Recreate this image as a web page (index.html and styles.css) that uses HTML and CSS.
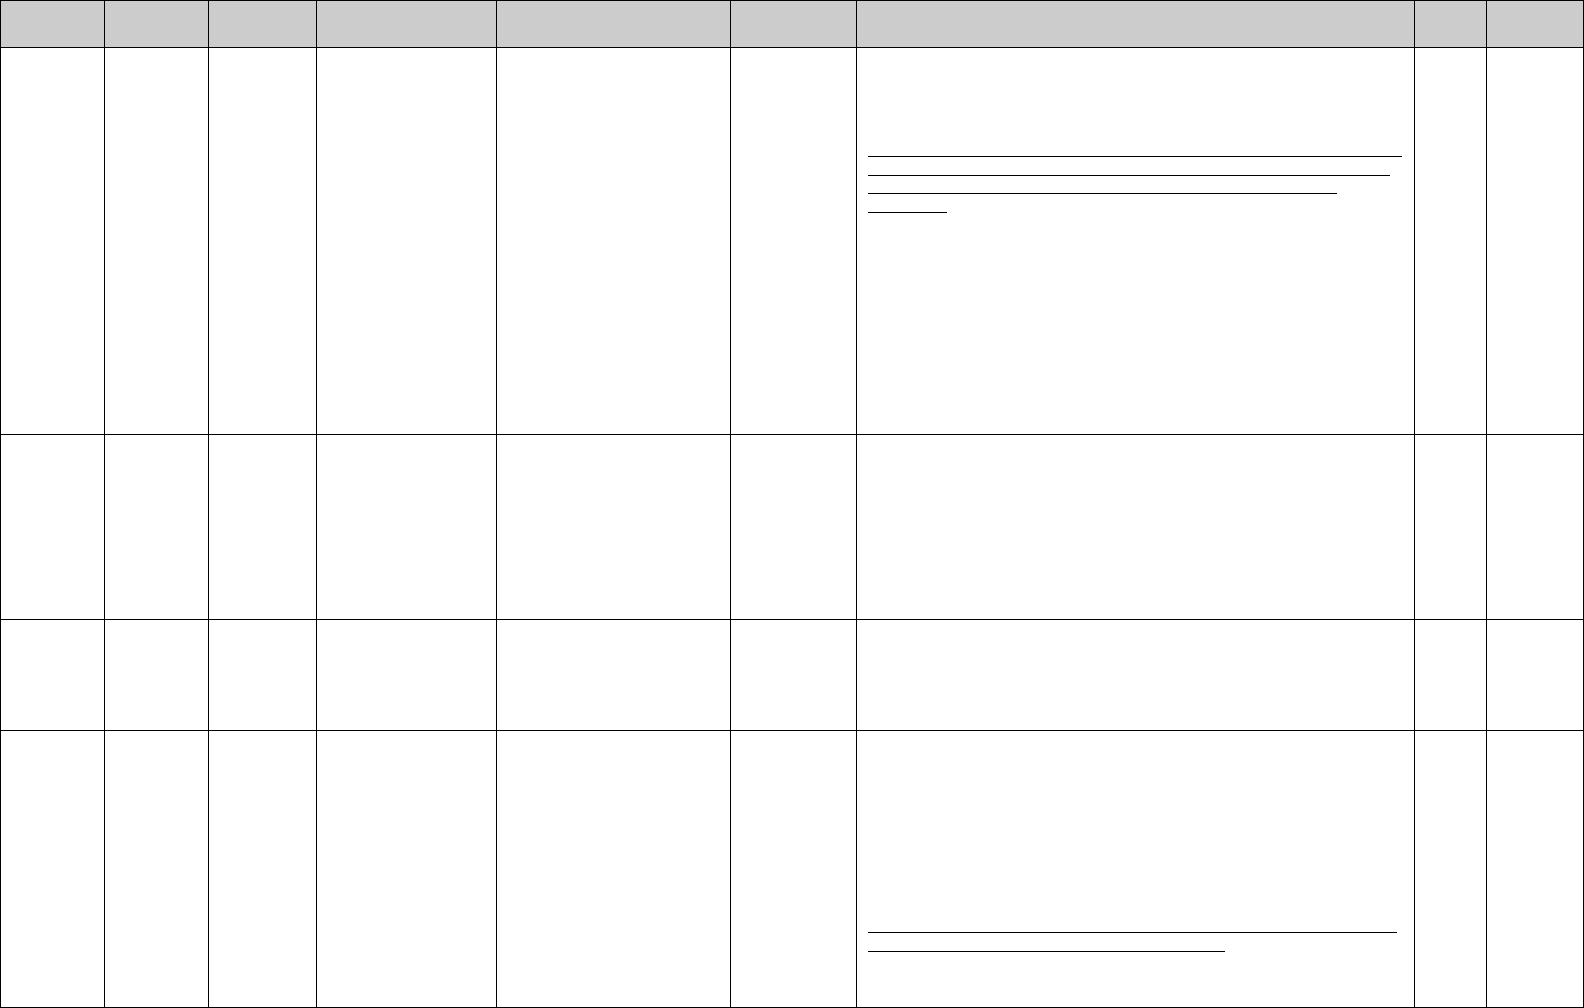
FILE: index.html
```html
<!DOCTYPE html>
<html lang="en">
<head>
    <meta charset="UTF-8">
    <meta name="viewport" content="width=device-width, initial-scale=1.0">
    <title>Table</title>
    <link rel="stylesheet" href="styles.css">
</head>
<body>
    <table class="grid">
        <colgroup>
            <col class="c1">
            <col class="c2">
            <col class="c3">
            <col class="c4">
            <col class="c5">
            <col class="c6">
            <col class="c7">
            <col class="c8">
            <col class="c9">
        </colgroup>
        <thead>
            <tr class="head">
                <th></th><th></th><th></th><th></th><th></th><th></th><th></th><th></th><th></th>
            </tr>
        </thead>
        <tbody>
            <tr class="r1">
                <td></td><td></td><td></td><td></td><td></td><td></td>
                <td>
                    <div class="links first">
                        <span class="ul w1"></span>
                        <span class="ul w2"></span>
                        <span class="ul w3"></span>
                        <span class="ul w4"></span>
                    </div>
                </td>
                <td></td><td></td>
            </tr>
            <tr class="r2">
                <td></td><td></td><td></td><td></td><td></td><td></td><td></td><td></td><td></td>
            </tr>
            <tr class="r3">
                <td></td><td></td><td></td><td></td><td></td><td></td><td></td><td></td><td></td>
            </tr>
            <tr class="r4">
                <td></td><td></td><td></td><td></td><td></td><td></td>
                <td>
                    <div class="links last">
                        <span class="ul w5"></span>
                        <span class="ul w6"></span>
                    </div>
                </td>
                <td></td><td></td>
            </tr>
        </tbody>
    </table>
</body>
</html>
```

FILE: styles.css
```css
body {
    margin: 0;
    font-family: "Liberation Serif", serif;
    font-size: 16px;
    background: white;
}
.grid {
    border-collapse: collapse;
    table-layout: fixed;
    width: 1583px;
}
.grid th,
.grid td {
    border: 1px solid black;
    padding: 0;
    vertical-align: top;
}
.grid th {
    background: #cccccc;
}
.c1 { width: 104px; }
.c2 { width: 104px; }
.c3 { width: 108px; }
.c4 { width: 180px; }
.c5 { width: 234px; }
.c6 { width: 126px; }
.c7 { width: 558px; }
.c8 { width: 72px; }
.c9 { width: 97px; }
.head { height: 47px; }
.r1 { height: 387px; }
.r2 { height: 185px; }
.r3 { height: 111px; }
.r4 { height: 277px; }
.links {
    padding-left: 11px;
}
.links.first {
    padding-top: 91px;
}
.links.last {
    padding-top: 184px;
}
.ul {
    display: block;
    height: 17.4px;
    border-bottom: 1px solid black;
}
.w1 { width: 534px; }
.w2 { width: 522px; }
.w3 { width: 469px; }
.w4 { width: 79px; }
.w5 { width: 529px; }
.w6 { width: 357px; }
```
